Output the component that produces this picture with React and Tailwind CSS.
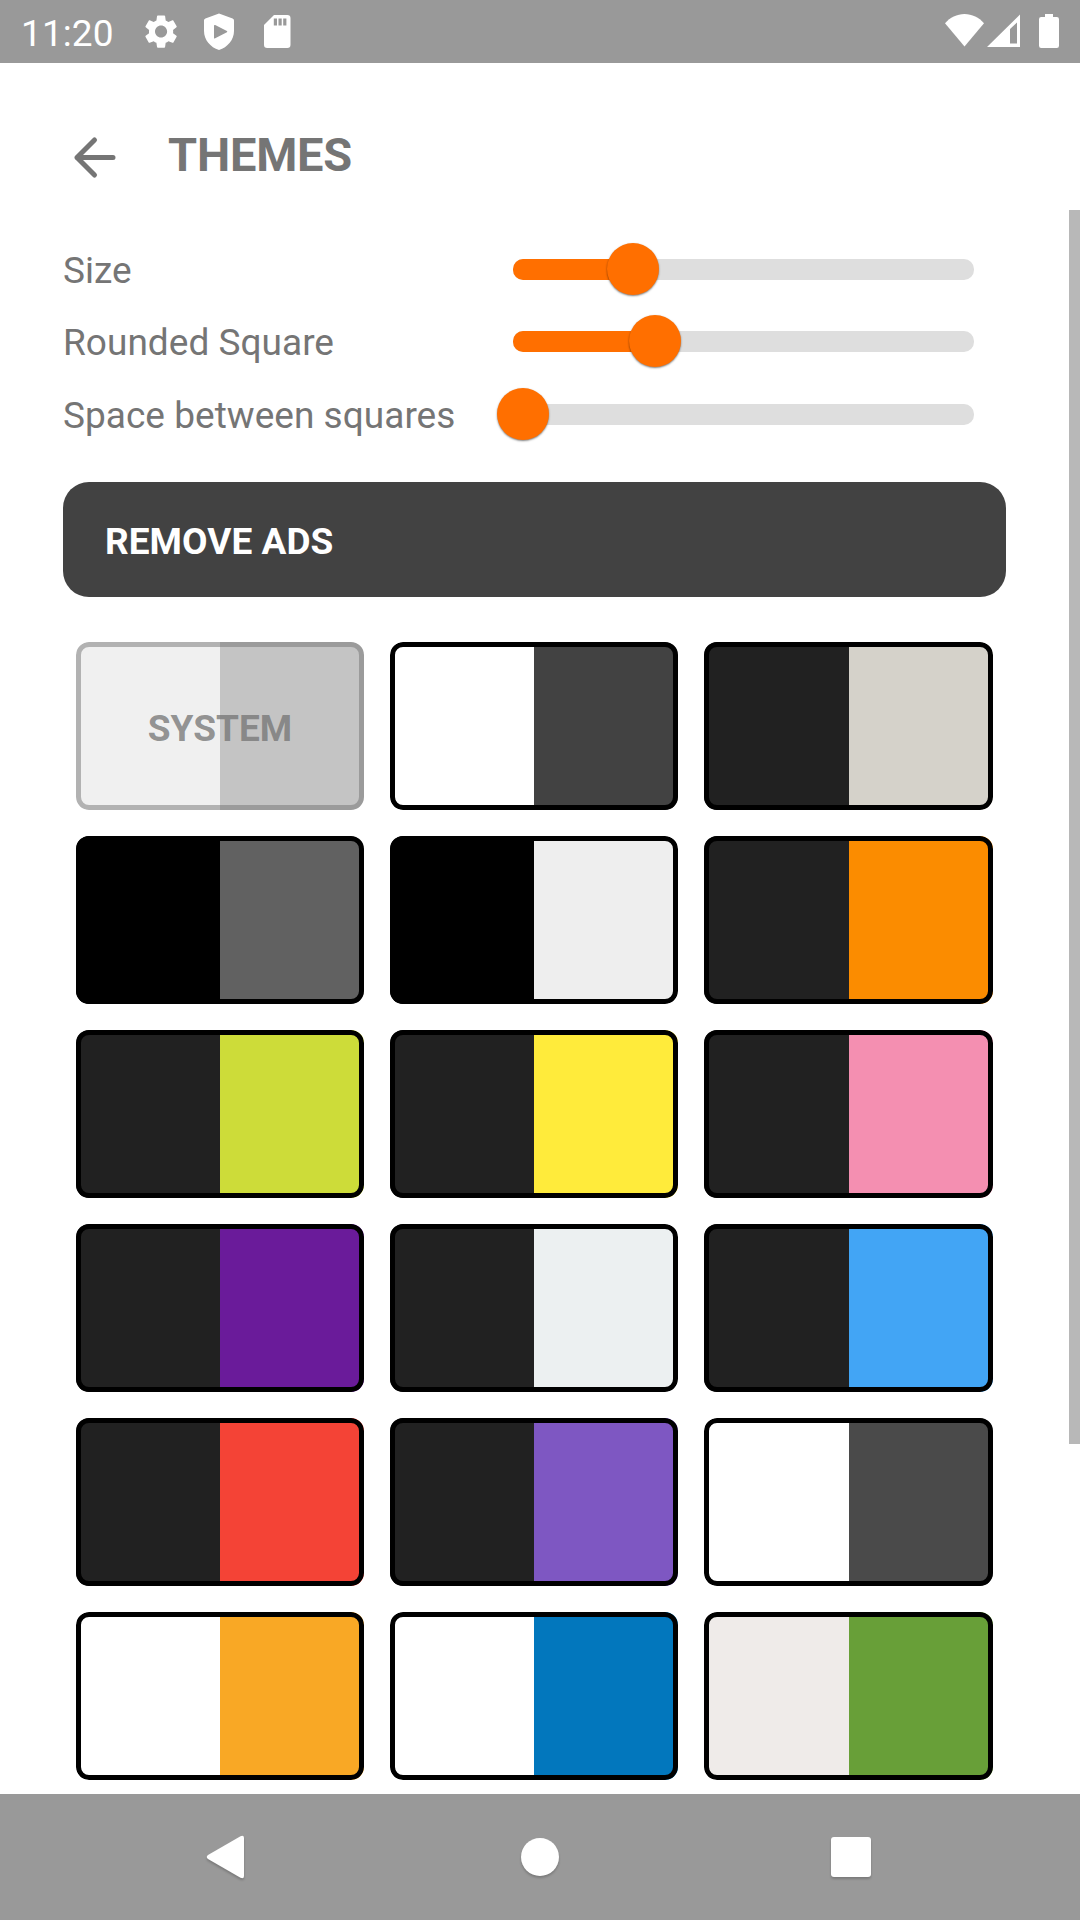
const THEMES = [
  ["bg-[#f0f0f0]", "bg-[#c4c4c4]", "SYSTEM"],
  ["bg-white", "bg-[#424242]"],
  ["bg-[#212121]", "bg-[#d5d2ca]"],
  ["bg-black", "bg-[#616161]"],
  ["bg-black", "bg-[#eeeeee]"],
  ["bg-[#212121]", "bg-[#fb8c00]"],
  ["bg-[#212121]", "bg-[#cddc39]"],
  ["bg-[#212121]", "bg-[#ffeb3b]"],
  ["bg-[#212121]", "bg-[#f48fb1]"],
  ["bg-[#212121]", "bg-[#6a1b9a]"],
  ["bg-[#212121]", "bg-[#ecf0f1]"],
  ["bg-[#212121]", "bg-[#42a5f5]"],
  ["bg-[#212121]", "bg-[#f44336]"],
  ["bg-[#212121]", "bg-[#7e57c2]"],
  ["bg-white", "bg-[#4a4a4a]"],
  ["bg-white", "bg-[#f9a825]"],
  ["bg-white", "bg-[#0277bd]"],
  ["bg-[#efebe9]", "bg-[#689f38]"],
];

function StatusBar() {
  return (
    <header className="flex h-[63px] shrink-0 items-center bg-[#999999] text-white">
      <span className="ml-[21px] w-[124px] pt-[4px] text-[37px] leading-[44px] tracking-[0.1px]">11:20</span>
      <svg className="h-[63px] w-[150px] shrink-0" viewBox="145 0 150 63" fill="currentColor">
        <path
          transform="translate(140.9 11.4) scale(1.68)"
          d="M19.14 12.94c.04-.3.06-.61.06-.94 0-.32-.02-.64-.07-.94l2.03-1.58c.18-.14.23-.41.12-.61l-1.92-3.32c-.12-.22-.37-.29-.59-.22l-2.39.96c-.5-.38-1.03-.7-1.62-.94l-.36-2.54c-.04-.24-.24-.41-.48-.41h-3.84c-.24 0-.43.17-.47.41l-.36 2.54c-.59.24-1.13.57-1.62.94l-2.39-.96c-.22-.08-.47 0-.59.22L2.74 8.87c-.12.21-.08.47.12.61l2.03 1.58c-.05.3-.09.63-.09.94s.02.64.07.94l-2.03 1.58c-.18.14-.23.41-.12.61l1.92 3.32c.12.22.37.29.59.22l2.39-.96c.5.38 1.03.7 1.62.94l.36 2.54c.05.24.24.41.48.41h3.84c.24 0 .44-.17.47-.41l.36-2.54c.59-.24 1.13-.56 1.62-.94l2.39.96c.22.08.47 0 .59-.22l1.92-3.32c.12-.22.07-.47-.12-.61l-2.01-1.58zM12 15.6c-1.98 0-3.6-1.62-3.6-3.6s1.62-3.6 3.6-3.6 3.6 1.62 3.6 3.6-1.62 3.6-3.6 3.6z"
        />
        <path
          fillRule="evenodd"
          d="M219 13.5l13.6 5.1q1.4.6 1.4 2V31c0 8.800-6.300 16.300-15 19-8.700-2.700-15-10.200-15-19V20.600q0-1.400 1.400-2zM214 25.500v12.400q.3.900 1.200.4l11.700-6q.8-.6 0-1.200l-11.700-6q-.9-.5-1.200.4z"
        />
        <path
          fillRule="evenodd"
          d="M274 15h13.300a3.200 3.200 0 0 1 3.200 3.200v26.600a3.200 3.200 0 0 1-3.200 3.200h-20.100a3.200 3.200 0 0 1-3.200-3.200V25zM273.800 18.500v7h3.200v-7zM278.500 18.500v7h3.200v-7zM283.200 18.500v7h3.200v-7z"
        />
      </svg>
      <svg className="ml-auto h-[63px] w-[140px] shrink-0" viewBox="940 0 140 63" fill="currentColor">
        <path d="M964.500 46.500L945 23.200C950 17.500 957 14 964.500 14s14.500 3.500 19.500 9.200z" />
        <path fillRule="evenodd" d="M1020 14.500V47h-33zM1017 22.500l-7 6.500v14.500h7z" />
        <path d="M1045 14h8v3h3.800q2.200 0 2.200 2.200v26.600q0 2.200-2.200 2.200h-15.600q-2.200 0-2.200-2.200V19.200q0-2.200 2.200-2.200h3.800z" />
      </svg>
    </header>
  );
}

function SliderRow({ label, value }) {
  return (
    <div className="flex h-[72.5px] items-center">
      <span className="w-[450px] shrink-0 pt-[3px] text-[37px] leading-[44px] tracking-[0.03px] whitespace-nowrap">{label}</span>
      <div className="relative h-[21px] w-[461px] rounded-[10px] bg-[#dedede]">
        <div className="h-full rounded-l-[10px] bg-[#ff6f00]" style={{ width: value }} />
        <div
          className="absolute -top-4 size-[52px] -translate-x-1/2 rounded-full bg-[#ff6f00] shadow-[0_1px_2px_rgba(0,0,0,0.5)]"
          style={{ left: value }}
        />
      </div>
    </div>
  );
}

function ThemeCard({ left, right, label }) {
  return (
    <button className="relative flex h-[168px] overflow-hidden rounded-[13px]">
      <span className={`h-full w-1/2 ${left}`} />
      <span className={`h-full w-1/2 ${right}`} />
      <span
        className={`absolute inset-0 flex items-center justify-center rounded-[13px] border-5 pt-[7px] text-[37px] leading-[44px] font-bold text-[rgba(116,116,116,0.77)] ${
          label ? "border-[rgba(110,110,110,0.477)]" : "border-black"
        }`}
      >
        {label}
      </span>
    </button>
  );
}

function NavBar() {
  return (
    <nav className="h-[126px] shrink-0 bg-[#999999]">
      <svg className="h-[126px] w-[1080px] drop-shadow-[0_2px_1px_rgba(0,0,0,0.2)]" viewBox="0 1794 1080 126" fill="white">
        <path d="M208 1855l32.500-18.800q3.500-1.500 3.500 1.800v38q0 3.300-3.500 1.800L208 1859q-2.500-2 0-4z" />
        <circle cx="540" cy="1857" r="19" />
        <rect x="831" y="1837" width="40" height="40" rx="3" />
      </svg>
    </nav>
  );
}

export default function App() {
  return (
    <div className="flex h-[1920px] w-[1080px] flex-col overflow-hidden bg-white font-[Roboto,sans-serif] text-[#757575]">
      <StatusBar />
      <main className="flex min-h-0 flex-1">
        <div className="flex w-[1069px] flex-col pl-[63px]">
          <div className="flex h-[147px] items-center">
            <svg className="mt-[41px] h-[44px] w-[105px] shrink-0" viewBox="63 135 105 44" fill="none" stroke="currentColor" strokeWidth="5" strokeLinecap="round" strokeLinejoin="round">
              <path d="M113 157.500H77M94.500 140L77 157.500L94.500 175" />
            </svg>
            <h1 className="mt-[37px] text-[47px] leading-[56px] font-bold tracking-[-0.2px]">THEMES</h1>
          </div>
          <section className="mt-[23px]">
            <SliderRow label="Size" value={120} />
            <SliderRow label="Rounded Square" value={142} />
            <SliderRow label="Space between squares" value={10} />
          </section>
          <button className="mt-[31px] flex h-[115px] w-[943px] shrink-0 items-center rounded-[26px] bg-[#424242] px-[42px] pt-[5px] text-[37px] font-bold tracking-[0.05px] text-white">
            REMOVE ADS
          </button>
          <section className="mt-[45px] ml-[13px] grid grid-cols-[288px_288px_289px] gap-[26px]">
            {THEMES.map(([left, right, label], i) => (
              <ThemeCard key={i} left={left} right={right} label={label} />
            ))}
          </section>
        </div>
        <div className="mt-[147px] h-[1234px] w-[11px] bg-[#b8b8b8]" />
      </main>
      <NavBar />
    </div>
  );
}
